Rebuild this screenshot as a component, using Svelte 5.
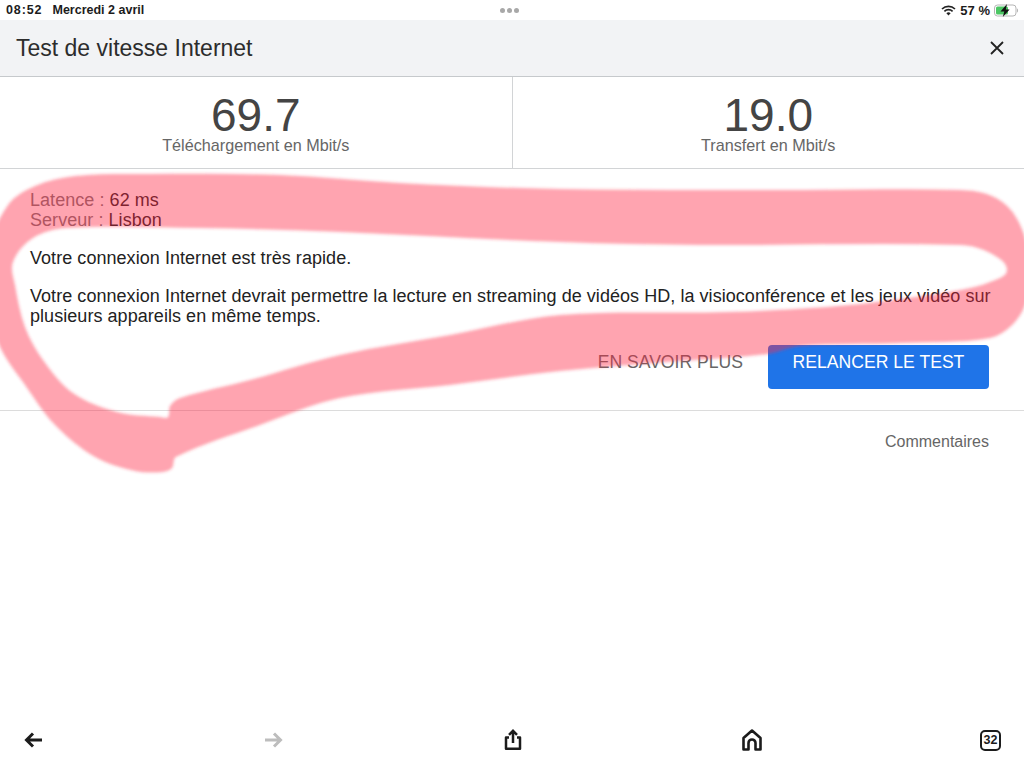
<script lang="ts">
  // contour of the hand-drawn highlight, clockwise from the top left
  const outline: [number, number][] = [
    [-14, 255], [8, 205], [35, 186], [75, 176], [150, 174], [280, 175], [400, 183], [560, 189], [800, 190],
    [960, 190], [992, 196], [1014, 214], [1028, 250], [1028, 295], [1015, 322], [990, 338], [900, 343], [800, 346],
    [768, 354], [680, 361], [560, 371], [450, 385], [340, 398], [260, 425], [176, 457], [172, 468], [163, 472],
    [135, 471], [95, 457], [55, 425], [25, 385], [0, 347], [-14, 300]
  ];
  const inner: [number, number][] = [
    [13, 262], [15, 285], [25, 327], [43, 360], [73, 393], [117, 412], [160, 417], [168, 417], [170, 406], [180, 398],
    [250, 380], [340, 355], [450, 335], [560, 315], [727, 312], [827, 307], [893, 300], [960, 290], [990, 282], [1007, 270],
    [990, 253], [960, 245], [700, 245], [560, 242], [340, 232], [200, 228], [67, 228], [33, 238]
  ];

  function unit(a: [number, number], b: [number, number]) {
    const dx = b[0] - a[0], dy = b[1] - a[1];
    const len = Math.hypot(dx, dy) || 1;
    return [dx / len, dy / len];
  }

  function smooth(pts: [number, number][]) {
    let d = `M${pts[0][0]} ${pts[0][1]}`;
    const n = pts.length;
    for (let i = 0; i < n; i++) {
      const p0 = pts[(i - 1 + n) % n], p1 = pts[i], p2 = pts[(i + 1) % n], p3 = pts[(i + 2) % n];
      const len = Math.hypot(p2[0] - p1[0], p2[1] - p1[1]) / 3;
      const t1 = unit(p0, p2), t2 = unit(p1, p3);
      d += `C${(p1[0] + t1[0] * len).toFixed(1)} ${(p1[1] + t1[1] * len).toFixed(1)} ${(p2[0] - t2[0] * len).toFixed(1)} ${(p2[1] - t2[1] * len).toFixed(1)} ${p2[0]} ${p2[1]}`;
    }
    return d + 'Z';
  }

  const highlight = smooth(outline) + smooth(inner);
</script>

<div class="page">
  <div class="status">
    <div class="status-left"><span class="time">08:52</span><span>Mercredi 2 avril</span></div>
    <div class="dots"><i></i><i></i><i></i></div>
    <div class="status-right">
      <svg width="15" height="11" viewBox="0 0 15 11" fill="none" stroke="#222" stroke-width="1.7">
        <path d="M1 4 A9.5 9.5 0 0 1 14 4" />
        <path d="M3.4 6.3 A6 6 0 0 1 11.6 6.3" />
        <path d="M7.5 10.5 L5.4 8.3 A3 3 0 0 1 9.6 8.3 Z" fill="#222" stroke="none" />
      </svg>
      <span>57 %</span>
      <svg width="25" height="13" viewBox="0 0 25 13">
        <rect x="0.5" y="1" width="21.5" height="11" rx="3" fill="#fff" stroke="#b5b5b5" />
        <rect x="2" y="2.5" width="12" height="8" rx="1.5" fill="#4cc764" />
        <path d="M23 4.5 C24.4 4.8 24.4 8.2 23 8.5 Z" fill="#b5b5b5" />
        <path d="M13 0 L6.5 7.4 L10.3 7.4 L8.8 13 L15.6 5.4 L11.8 5.4 Z" fill="#111" />
      </svg>
    </div>
  </div>

  <header class="title-bar">
    <h1>Test de vitesse Internet</h1>
    <svg class="close" width="16" height="16" viewBox="0 0 16 16" stroke="#222" stroke-width="1.8" fill="none">
      <path d="M2 2 L14 14 M14 2 L2 14" />
    </svg>
  </header>

  <section class="stats">
    <div class="stat">
      <div class="value">69.7</div>
      <div class="label">Téléchargement en Mbit/s</div>
    </div>
    <div class="stat">
      <div class="value">19.0</div>
      <div class="label">Transfert en Mbit/s</div>
    </div>
  </section>

  <section class="details">
    <div class="meta">
      <div><span class="key">Latence :</span> 62 ms</div>
      <div><span class="key">Serveur :</span> Lisbon</div>
    </div>
    <p>Votre connexion Internet est très rapide.</p>
    <p>Votre connexion Internet devrait permettre la lecture en streaming de vidéos HD, la visioconférence et les jeux vidéo sur plusieurs appareils en même temps.</p>
    <div class="actions">
      <button class="link">EN SAVOIR PLUS</button>
      <button class="primary">RELANCER LE TEST</button>
    </div>
  </section>

  <div class="feedback">Commentaires</div>

  <div class="spacer"></div>

  <nav class="toolbar">
    <svg width="24" height="24" viewBox="0 0 24 24" fill="none" stroke="#1c1c1c" stroke-width="3">
      <path d="M20 12 H5 M11 5.5 L4.5 12 L11 18.5" />
    </svg>
    <svg width="24" height="24" viewBox="0 0 24 24" fill="none" stroke="#bdbdbd" stroke-width="3">
      <path d="M4 12 H19 M13 5.5 L19.5 12 L13 18.5" />
    </svg>
    <svg width="24" height="24" viewBox="0 0 24 24" fill="none" stroke="#1c1c1c" stroke-width="2.5">
      <path d="M8 9.5 H5 V20.8 H19 V9.5 H16" stroke-linejoin="round" />
      <path d="M12 15 V3 M8 6.8 L12 2.8 L16 6.8" />
    </svg>
    <svg width="24" height="24" viewBox="0 0 24 24" fill="none" stroke="#1c1c1c" stroke-width="2.6" stroke-linejoin="round">
      <path d="M3.5 21.5 V10 L12 2.5 L20.5 10 V21.5 H15.5 V15 A3.5 3.5 0 0 0 8.5 15 V21.5 Z" />
    </svg>
    <div class="tabs">32</div>
  </nav>

  <svg class="scribble" width="1024" height="768" viewBox="0 0 1024 768">
    <defs>
      <filter id="soft" x="-5%" y="-5%" width="110%" height="110%"><feGaussianBlur stdDeviation="1.6" /></filter>
    </defs>
    <path d={highlight} fill="#ff2841" fill-opacity="0.42" fill-rule="evenodd" filter="url(#soft)" />
  </svg>
</div>

<style>
  :global(body) { background: #fff; }

  .page {
    position: relative;
    display: flex;
    flex-direction: column;
    width: 1024px;
    height: 768px;
    overflow: hidden;
    background: #fff;
    font-family: "Liberation Sans", Arial, sans-serif;
    color: #222;
  }

  /* barre d'état */
  .status {
    display: flex;
    align-items: center;
    justify-content: space-between;
    height: 20px;
    padding: 0 5px 0 6px;
    font-size: 12.5px;
    font-weight: bold;
    color: #1c1c1c;
  }
  .status-left { display: flex; gap: 10px; }
  .time { letter-spacing: 0.9px; }
  .status-right { display: flex; align-items: center; gap: 4px; font-size: 13px; }
  .dots { display: flex; gap: 2px; margin-left: -66px; }
  .dots i { width: 5px; height: 5px; border-radius: 50%; background: #a8a8a8; }

  .title-bar {
    display: flex;
    align-items: center;
    justify-content: space-between;
    height: 56px;
    padding: 0 19px 0 16px;
    background: #f2f3f5;
    border-bottom: 1px solid #c6c9cc;
  }
  h1 { margin: 0; font-size: 23px; font-weight: normal; color: #2c2c2c; }

  .stats {
    display: flex;
    height: 91px;
    border-bottom: 1px solid #d2d4d6;
  }
  .stat {
    flex: 1;
    padding-top: 16px;
    text-align: center;
  }
  .stat + .stat { border-left: 1px solid #d2d4d6; }
  .value { font-size: 46px; line-height: 44px; color: #444; }
  .label { font-size: 16.2px; line-height: 18px; margin-top: -1px; color: #666; }

  .details {
    height: 242px;
    padding: 21px 30px 0 30px;
    border-bottom: 1px solid #dcdcdc;
    box-sizing: border-box;
    font-size: 18px;
    letter-spacing: 0.05px;
    line-height: 20px;
  }
  .meta { margin-bottom: 18px; color: #222; }
  .key { color: #777; }
  p { margin: 0 0 18px; color: #222; }
  p + p { margin-bottom: 0; }

  .actions {
    display: flex;
    justify-content: flex-end;
    gap: 25px;
    margin: 19px 5px 0 0;
  }
  button {
    font-family: inherit;
    font-size: 17.6px;
    border: none;
    background: none;
    padding: 0 0 10px;
    height: 44px;
  }
  .link { color: #666; }
  .primary {
    width: 221px;
    border-radius: 4px;
    background: #1f74e8;
    color: #fff;
  }

  .feedback {
    padding: 22px 35px 0 0;
    text-align: right;
    font-size: 16px;
    line-height: 18px;
    color: #666;
  }

  .spacer { flex: 1; }

  .toolbar {
    display: flex;
    align-items: center;
    justify-content: space-between;
    height: 56px;
    padding: 0 22px;
  }
  .tabs {
    box-sizing: border-box;
    width: 21px;
    height: 21px;
    margin: 0 1px;
    border: 2.5px solid #1c1c1c;
    border-radius: 5px;
    font-size: 12.5px;
    font-weight: bold;
    line-height: 16px;
    text-align: center;
    color: #1c1c1c;
  }

  /* trait de surlignage posé sur la capture */
  .scribble {
    position: absolute;
    left: 0;
    top: 0;
    pointer-events: none;
  }
</style>
